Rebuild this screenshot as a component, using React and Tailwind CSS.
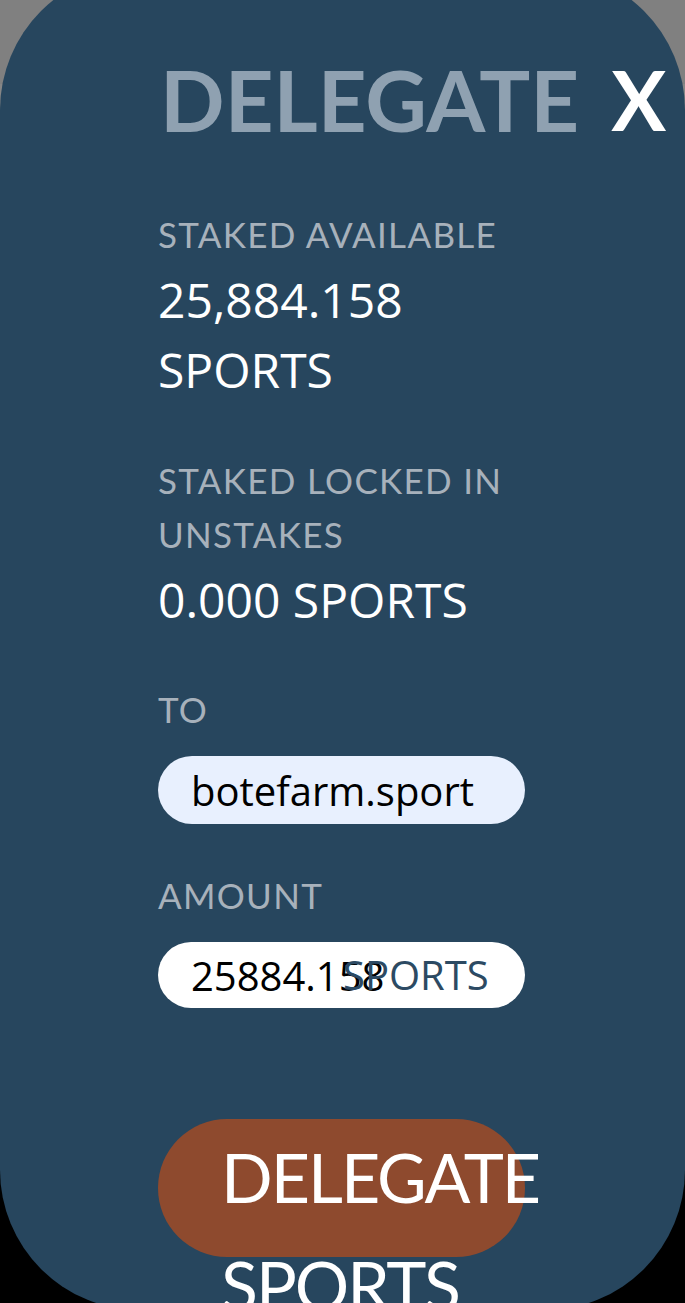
import React, { useState } from "react";

const Label = ({ children }) => (
   <p className="font-['Lato',sans-serif] text-[35px] leading-[54px] tracking-[1.3px] text-[#a7b1bb]">
      {children}
   </p>
);

const Value = ({ children }) => (
   <p className="mt-[4px] font-['Open_Sans',sans-serif] text-[48px] leading-[70px] text-white">
      {children}
   </p>
);

const App = () => {
   const [to, setTo] = useState("botefarm.sport");
   const [amount, setAmount] = useState("25884.158");

   return (
      <div className="relative h-[1303px] w-full overflow-hidden bg-[linear-gradient(to_bottom,#808080_84px,#868686_84px,#868686_50%,#000_50%)]">
         {/* Delegate modal */}
         <div className="-mt-[30px] h-[1340px] w-full rounded-[140px] bg-[#27465e] pl-[158px] pt-[87px]">
            <div className="flex items-center gap-[32px] font-['Lato',sans-serif] text-[85px] font-bold leading-[85px]">
               <h1 className="pl-[2px] text-[#8fa1b1]">DELEGATE</h1>
               <button className="text-[82px] text-white">X</button>
            </div>

            <div className="mt-[65px] w-[367px]">
               <Label>STAKED AVAILABLE</Label>
               <Value>25,884.158 SPORTS</Value>
            </div>

            <div className="mt-[48px] w-[367px]">
               <Label>STAKED LOCKED IN UNSTAKES</Label>
               <Value>0.000 SPORTS</Value>
            </div>

            <div className="mt-[47px] w-[367px]">
               <Label>TO</Label>
               <input
                  value={to}
                  onChange={(e) => setTo(e.target.value)}
                  className="mt-[20px] h-[68px] w-[367px] rounded-full bg-[#e8f0fe] pl-[33px] font-['Open_Sans',sans-serif] text-[40px] text-black focus:outline-none"
               />
            </div>

            <div className="mt-[44px] w-[367px]">
               <Label>AMOUNT</Label>
               <div className="relative mt-[20px] h-[66px] w-[367px]">
                  <input
                     value={amount}
                     onChange={(e) => setAmount(e.target.value)}
                     className="h-[66px] w-[367px] rounded-full bg-white pl-[33px] font-['Open_Sans',sans-serif] text-[40px] text-black focus:outline-none"
                  />
                  <span className="pointer-events-none absolute left-[185px] top-0 font-['Open_Sans',sans-serif] text-[40px] leading-[66px] text-[#2c4a63]">
                     SPORTS
                  </span>
               </div>
            </div>

            <div className="mt-[111px] flex h-[138px] w-[367px] items-start rounded-full bg-[#8e4a2e] pl-[63px] pt-[4px] font-['Lato',sans-serif] text-[68px] leading-[108px] tracking-[-2px] text-white">
               <span className="w-[241px]">DELEGATE SPORTS</span>
            </div>
         </div>
      </div>
   );
};

export default App;
